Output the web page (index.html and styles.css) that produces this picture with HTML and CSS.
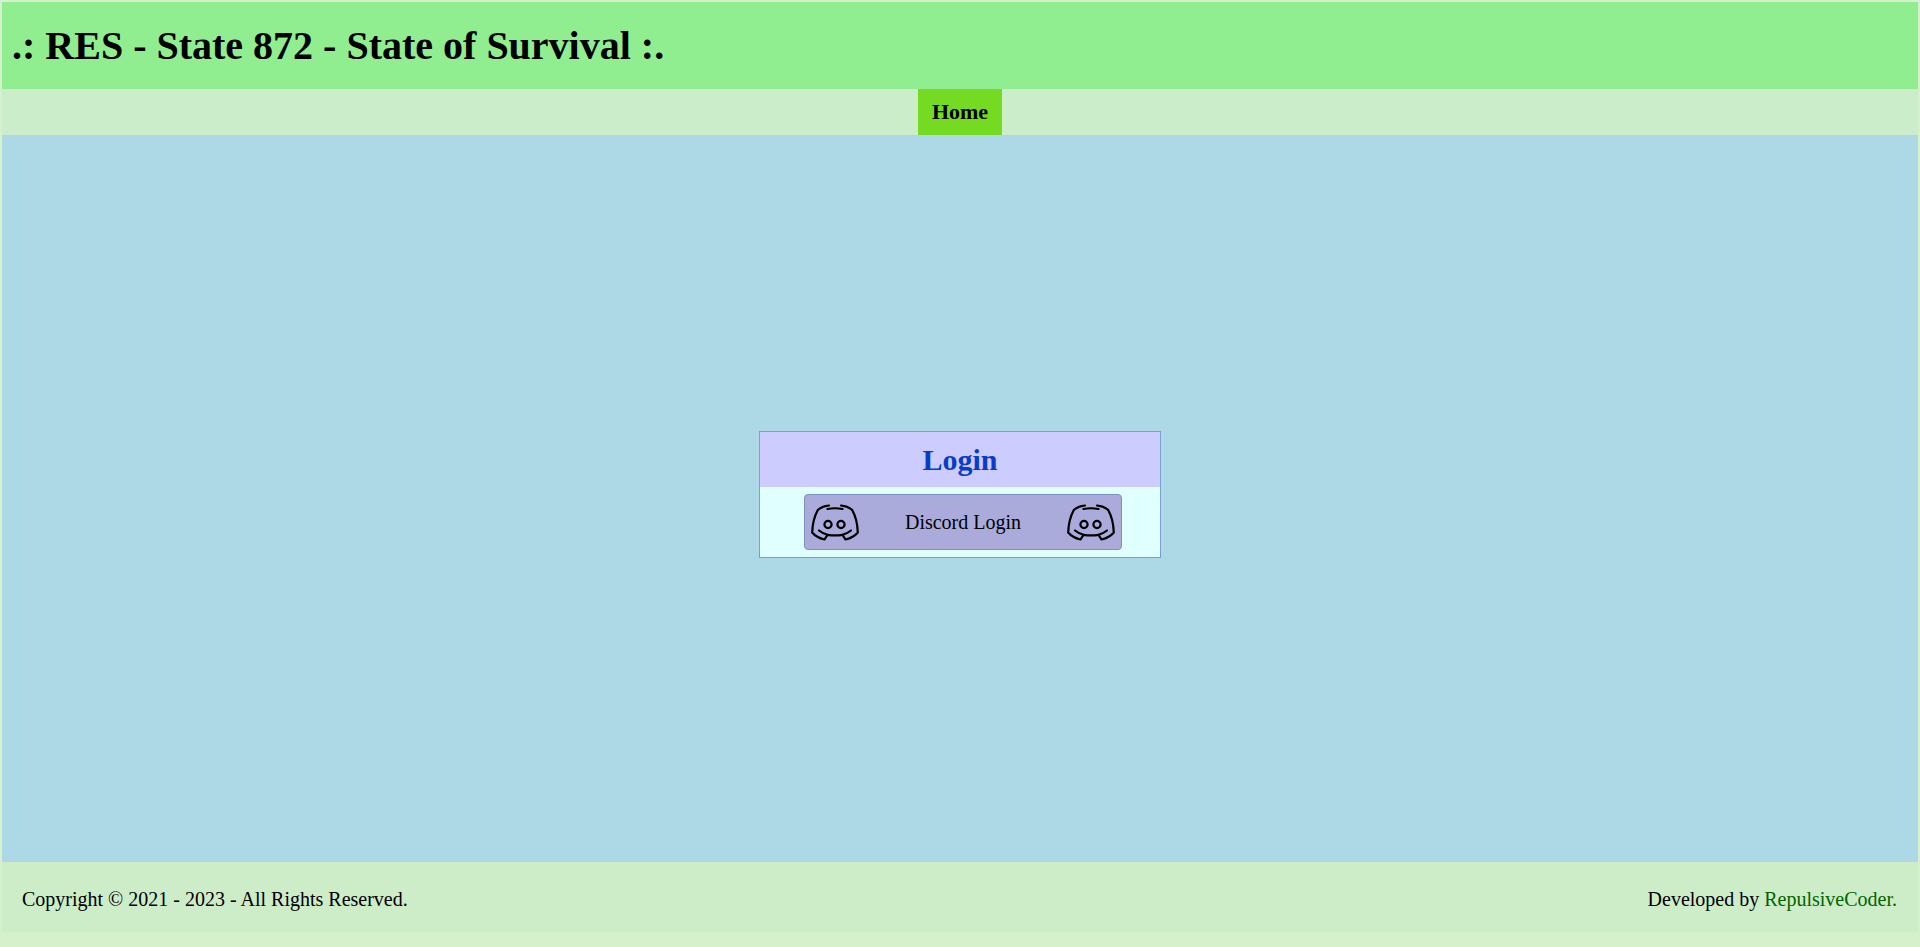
FILE: index.html
```html
<!DOCTYPE html>
<html lang="en">
<head>
<meta charset="utf-8">
<title>RES - State 872 - State of Survival</title>
<link rel="stylesheet" href="styles.css">
</head>
<body>
<div class="page">
  <header class="site-header"><h1>.: RES - State 872 - State of Survival :.</h1></header>
  <nav class="site-nav"><a class="nav-item" href="#">Home</a></nav>
  <main class="site-main">
    <section class="login-panel">
      <h2 class="login-title">Login</h2>
      <div class="login-body">
        <a class="discord-button" href="#">
          <svg class="discord-icon" viewBox="0 0 48 48" aria-hidden="true"><path d="M16.5 11C21.5 10 26.5 10 31.5 11M18 7.5C13.5 8 9.5 9.5 6.8 12C3.5 18 1.5 26 1.2 34.5C4 37.8 9 40.4 13.5 41.5L16.5 36.8C21 37.6 27 37.6 31.5 36.8L34.5 41.5C39 40.4 44 37.8 46.8 34.5C46.5 26 44.5 18 41.2 12C38.5 9.5 34.5 8 30 7.5"/><path d="M8 32.5C10.5 34.5 13 36 16.5 36.8M40 32.5C37.5 34.5 35 36 31.5 36.8"/><circle cx="17" cy="26.5" r="3.6"/><circle cx="30" cy="26.5" r="3.6"/></svg>
          <span class="discord-label">Discord Login</span>
          <svg class="discord-icon" viewBox="0 0 48 48" aria-hidden="true"><path d="M16.5 11C21.5 10 26.5 10 31.5 11M18 7.5C13.5 8 9.5 9.5 6.8 12C3.5 18 1.5 26 1.2 34.5C4 37.8 9 40.4 13.5 41.5L16.5 36.8C21 37.6 27 37.6 31.5 36.8L34.5 41.5C39 40.4 44 37.8 46.8 34.5C46.5 26 44.5 18 41.2 12C38.5 9.5 34.5 8 30 7.5"/><path d="M8 32.5C10.5 34.5 13 36 16.5 36.8M40 32.5C37.5 34.5 35 36 31.5 36.8"/><circle cx="17" cy="26.5" r="3.6"/><circle cx="30" cy="26.5" r="3.6"/></svg>
        </a>
      </div>
    </section>
  </main>
  <footer class="site-footer">
    <span>Copyright © 2021 - 2023 - All Rights Reserved.</span>
    <span>Developed by <a class="dev-link" href="#">RepulsiveCoder.</a></span>
  </footer>
</div>
</body>
</html>
```
FILE: styles.css
```css
* { box-sizing: border-box; }
html, body { margin: 0; height: 100%; }
body {
  background: #d4f1cc;
  color: #000;
  font-family: "Liberation Serif", "Times New Roman", serif;
  overflow: hidden;
}
a { color: inherit; text-decoration: none; }
.page {
  height: 947px;
  padding: 2px 2px 15px;
  display: grid;
  grid-template-rows: 87px 46px 1fr 70px;
}
.site-header {
  background: #90ee90;
  display: flex;
  align-items: center;
  padding-left: 10px;
}
.site-header h1 { margin: 0; font-size: 40px; font-weight: bold; line-height: 46px; }
.site-nav {
  background: #ccedc9;
  display: flex;
  justify-content: center;
}
.nav-item {
  background: #74db22;
  padding: 0 14px;
  font-size: 22px;
  font-weight: bold;
  line-height: 46px;
  height: 46px;
}
.site-main {
  background: #add8e6;
  display: flex;
  align-items: center;
  justify-content: center;
  padding-bottom: 9px;
}
.login-panel {
  width: 402px;
  height: 127px;
  border: 1px solid #7a9fcf;
  background: #e0ffff;
}
.login-title {
  margin: 0;
  height: 55px;
  background: #ccccff;
  color: #0a3cc8;
  font-size: 30px;
  font-weight: bold;
  line-height: 55px;
  text-align: center;
}
.login-body { padding: 7px 38px 0 44px; }
.discord-button {
  height: 56px;
  background: #aaaadb;
  border: 1px solid #7f8fc4;
  border-radius: 4px;
  display: flex;
  align-items: center;
  justify-content: space-between;
  padding: 0 0 0 6px;
  font-size: 20px;
}
.discord-label { padding-top: 2px; }
.discord-icon {
  width: 48px;
  height: 48px;
  fill: none;
  stroke: #000;
  stroke-width: 2.2;
  stroke-linejoin: round;
  stroke-linecap: round;
}
.discord-button .discord-icon:last-child { margin-right: 6px; }
.site-footer {
  background: #cdedc9;
  display: flex;
  align-items: center;
  justify-content: space-between;
  padding: 4px 21px 0 20px;
  font-size: 20px;
}
.dev-link { color: #006400; }
```
